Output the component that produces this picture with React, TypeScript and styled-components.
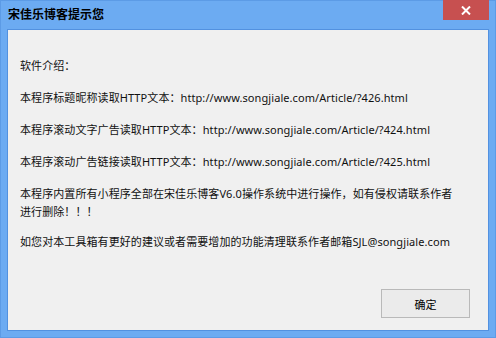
import React from 'react';
import styled, { createGlobalStyle } from 'styled-components';

const GlobalStyle = createGlobalStyle`
  html, body {
    margin: 0;
    padding: 0;
    background: #6cabf2;
  }
  body {
    font-family: 'Noto Sans', 'Noto Sans CJK SC', sans-serif;
  }
`;

function App(): React.ReactElement {
  return (
    <>
      <GlobalStyle />
      <Window>
        <TitleBar>
          <Title>宋佳乐博客提示您</Title>
          <CloseButton aria-label="关闭">
            <svg width="10" height="9" viewBox="0 0 10 9">
              <path d="M1 0.5 L9 8.5 M9 0.5 L1 8.5" stroke="#fff" strokeWidth="2" />
            </svg>
          </CloseButton>
        </TitleBar>
        <Client>
          <Content>
            <Para>软件介绍：</Para>
            <Para>本程序标题昵称读取HTTP文本：http://www.songjiale.com/Article/?426.html</Para>
            <Para>本程序滚动文字广告读取HTTP文本：http://www.songjiale.com/Article/?424.html</Para>
            <Para>本程序滚动广告链接读取HTTP文本：http://www.songjiale.com/Article/?425.html</Para>
            <Para>
              本程序内置所有小程序全部在宋佳乐博客V6.0操作系统中进行操作，如有侵权请联系作者
              <br />
              进行删除！！！
            </Para>
            <Para $tight>如您对本工具箱有更好的建议或者需要增加的功能清理联系作者邮箱SJL@songjiale.com</Para>
          </Content>
          <Footer>
            <OkButton>确定</OkButton>
          </Footer>
        </Client>
      </Window>
    </>
  );
}

export default App;

const Window = styled.div`
  width: 496px;
  height: 338px;
  box-sizing: border-box;
  border: 1px solid #5c9be6;
  background: #6cabf2;
  display: flex;
  flex-direction: column;
`;

const TitleBar = styled.div`
  height: 28px;
  display: flex;
  align-items: flex-start;
  padding-left: 7px;
  padding-right: 6px;
`;

const Title = styled.div`
  flex: 1;
  line-height: 28px;
  font-size: 12px;
  font-weight: bold;
  color: #000;
`;

const CloseButton = styled.div`
  width: 46px;
  height: 20px;
  margin-top: -1px;
  background: #c75050;
  display: flex;
  align-items: center;
  justify-content: center;
`;

const Client = styled.div`
  flex: 1;
  margin: 0 6px 6px;
  border: 1px solid #5291e0;
  background: #f0f0f0;
  display: flex;
  flex-direction: column;
`;

const Content = styled.div`
  flex: 1;
  padding: 27px 12px 0;
  display: flex;
  flex-direction: column;
  gap: 14px;
`;

const Para = styled.div<{ $tight?: boolean }>`
  font-size: 11px;
  line-height: 18px;
  letter-spacing: 0.08px;
  color: #111;
  white-space: nowrap;
  margin-top: ${(p) => (p.$tight ? '-2px' : '0')};
`;

const Footer = styled.div`
  display: flex;
  justify-content: flex-end;
  padding: 0 18px 12px;
`;

const OkButton = styled.button`
  width: 89px;
  height: 29px;
  box-sizing: border-box;
  border: 1px solid #b9b9b9;
  background: #ebebeb;
  font-family: 'Noto Sans', 'Noto Sans CJK SC', sans-serif;
  font-size: 11px;
  color: #000;
  padding: 0;
`;
